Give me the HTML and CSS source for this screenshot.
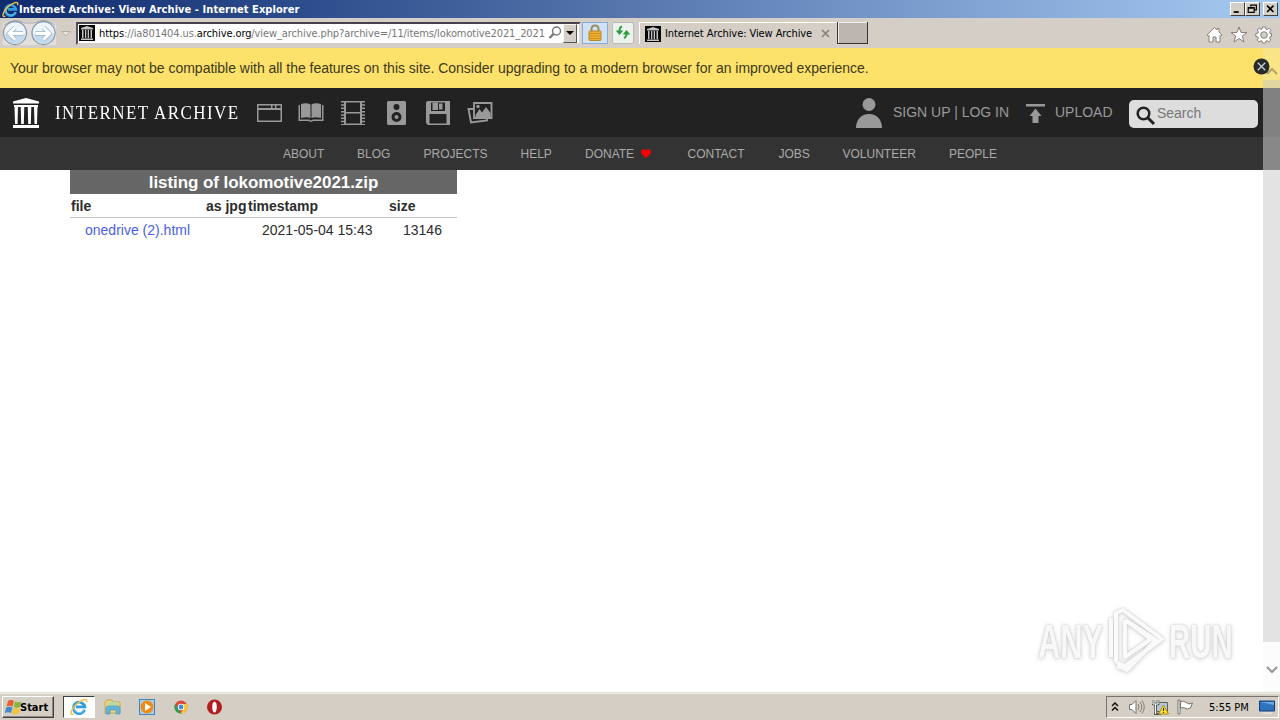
FILE: index.html
```html
<!DOCTYPE html>
<html lang="en">
<head>
<meta charset="utf-8">
<title>Internet Archive: View Archive</title>
<link rel="stylesheet" href="styles.css">
</head>
<body>
<svg width="0" height="0" class="defs">
  <defs>
    <symbol id="ie" viewBox="0 0 18 18">
      <path d="M14.6 11.8A5.7 5.7 0 1 1 14.8 8.8H6" fill="none" stroke="#2e9bdb" stroke-width="2.800"/>
      <path d="M14 11.6A5.2 5.2 0 0 1 4 10" fill="none" stroke="#7ed1f4" stroke-width="1"/>
      <path d="M3.500 16C-1 18 1 11 6 6.500C11 2 18 -1 16.500 4.500" fill="none" stroke="#f0c145" stroke-width="1.500"/>
    </symbol>
    <symbol id="temple" viewBox="0 0 28 30">
      <path d="M14 0L27 3.500V5.500H1V3.500ZM2 7H26V9H2ZM2.500 9H6L5.500 26H3ZM8.700 9H12.300L11.800 26H9.200ZM15.700 9H19.300L18.800 26H16.200ZM22 9H25.500L25 26H22.500ZM1 27H27V30H1Z" fill="currentColor"/>
    </symbol>
    <symbol id="favicon" viewBox="0 0 16 16">
      <path d="M0 0H16V16H0Z" fill="#050505"/>
      <path d="M8 1L14 3V4.500H2V3ZM3 5H4.500V13H3ZM6 5H7.300V13H6ZM8.700 5H10V13H8.700ZM11.500 5H13V13H11.500ZM2 13.500H14V15H2Z" fill="#c4c4c4"/>
    </symbol>
  </defs>
</svg>
<div class="screen">
  <div class="titlebar">
    <svg class="title-icon" width="17" height="17"><use href="#ie"/></svg>
    <span class="title-text">Internet Archive: View Archive - Internet Explorer</span>
    <div class="window-buttons">
      <svg class="winbtn" viewBox="0 0 15 14"><path d="M3 10.500H9" stroke="#000" stroke-width="2"/></svg>
      <svg class="winbtn" viewBox="0 0 15 14"><path d="M5.500 4V2.500H12V8H10M5 2.500H12.500M2.500 5.500H9.500V11H2.500ZM2 6H10" fill="none" stroke="#000" stroke-width="1.400"/></svg>
      <svg class="winbtn close" viewBox="0 0 15 14"><path d="M3.500 3L11 10.500M11 3L3.500 10.500" stroke="#000" stroke-width="1.900"/></svg>
    </div>
  </div>

  <div class="toolbar">
    <svg class="history" width="74" height="30" viewBox="0 0 74 30">
      <path d="M3 5Q14 -1 25 4H34Q45 -1 56 6V27H3Z" fill="#e2e0de"/>
      <path d="M4 7Q14 -1 25 5H34Q45 -1 55 7" fill="none" stroke="#aaa9aa"/>
      <g fill="#edf4fa" stroke="#8999a8" stroke-width="1.300"><circle cx="15" cy="15" r="11.500"/><circle cx="43.500" cy="15" r="11.500"/></g>
      <g fill="#c3d9ec"><path d="M5 16H25A10 10 0 0 1 5 16ZM33.500 16H53.500A10 10 0 0 1 33.500 16Z"/></g>
      <path d="M23 15.500H10M15 9.500L9 15.500L15 21.500M35.500 15.500H48.500M43.500 9.500L49.500 15.500L43.500 21.500" fill="none" stroke="#98b2c9" stroke-width="4.500"/>
      <path d="M23 15.500H10M15 9.500L9 15.500L15 21.500M35.500 15.500H48.500M43.500 9.500L49.500 15.500L43.500 21.500" fill="none" stroke="#fff" stroke-width="3.100"/>
      <path d="M61.500 13.500H70L65.800 18Z" fill="#e8e5df" stroke="#b1aea8"/>
    </svg>
    <div class="address">
      <svg width="16" height="16"><use href="#favicon"/></svg>
      <span class="url"><b>https</b>://ia801404.us.<b>archive.org</b>/view_archive.php?archive=/11/items/lokomotive2021_2021</span>
      <svg class="find" width="14" height="16" viewBox="0 0 14 16"><circle cx="8.500" cy="6" r="4" fill="none" stroke="#777" stroke-width="1.500"/><path d="M5.500 9L1.500 13" stroke="#777" stroke-width="2.400"/></svg>
      <span class="dropdown"></span>
    </div>
    <div class="lock">
      <svg width="14" height="18" viewBox="0 0 14 18"><path d="M3.500 9V5Q3.500 1.500 7 1.500T10.500 5V9" fill="none" stroke="#9c8a62" stroke-width="2"/><rect x="1" y="7" width="12" height="9.500" rx="1" fill="#eeb02e" stroke="#b8842a"/><path d="M2 9.500H12M2 12H12M2 14.500H12" stroke="#cc8f22"/></svg>
    </div>
    <div class="refresh">
      <svg width="16" height="16" viewBox="0 0 16 16"><path d="M7 1.500Q4.500 2 4.500 6M9 13Q11.500 12 11.500 9" fill="none" stroke="#38a048" stroke-width="2"/><path d="M.7 5.500H8.300L4.500 10ZM7.700 9.500H15.300L11.500 5Z" fill="#2c9b3c"/></svg>
    </div>
    <div class="tab">
      <svg width="16" height="16"><use href="#favicon"/></svg>
      <span class="tab-text">Internet Archive: View Archive</span>
      <svg class="tab-close" width="9" height="9" viewBox="0 0 9 9"><path d="M1 1L8 8M8 1L1 8" stroke="#85817b" stroke-width="1.700"/></svg>
    </div>
    <div class="newtab"></div>
    <svg class="tools" width="66" height="20" viewBox="0 0 66 20" fill="#fff" stroke="#85817c">
      <path d="M1 10L8.500 2.500L11 5V3.500H13V7L16 10L14.500 11L14 10.500V17H10V12H7V17H3V10.500L2.500 11Z"/>
      <path d="M33 2L35 7.500H41L36.300 11L38 17L33 13.500L28 17L29.700 11L25 7.500H31Z"/>
      <path fill-rule="evenodd" d="M56.500 2H59.500L60 4.200L61 4.600L63 3.200L65 5.200L63.500 7.200L64 8.400H65.500V11.500L64 12L63.500 13L64.800 15L62.800 17L61 15.700L60 16L59.500 18H56.500L56 16L55 15.700L53 17L51 15L52.400 13L52 12L49.800 11.500V8.500L52 8L52.500 7L51.200 5L53.200 3L55 4.500L56 4ZM58 6.700A3.300 3.300 0 1 0 58 13.300A3.300 3.300 0 1 0 58 6.700Z"/>
    </svg>
  </div>

  <main class="page">
    <div class="banner">Your browser may not be compatible with all the features on this site. Consider upgrading to a modern browser for an improved experience.</div>
    <svg class="banner-close" width="17" height="17" viewBox="0 0 17 17"><circle cx="8.500" cy="8.500" r="8" fill="#292b2b"/><path d="M4.800 4.800L12.200 12.200M12.200 4.800L4.800 12.200" stroke="#c7d0d5" stroke-width="1.300"/></svg>

    <nav class="topnav">
      <svg class="logo" width="28" height="30"><use href="#temple"/></svg>
      <span class="wordmark">INTERNET ARCHIVE</span>
      <div class="media">
        <svg viewBox="0 0 26 26"><path fill-rule="evenodd" d="M1 4H26V22H1ZM2.500 5.500V8H15V5.500ZM16.500 5.500V8H19V5.500ZM20.500 5.500V8H24.500V5.500ZM2.500 10V20.500H24.500V10Z"/></svg>
        <svg viewBox="0 0 26 26"><path d="M3 4Q9 2.500 12.500 4.500V18Q9 16.500 3 18ZM13.500 4.500Q17 2.500 23 4V18Q17 16.500 13.500 18ZM.5 5H2V19.500H11L13 20.500L15 19.500H24V5H25.500V21H15.500L13 22L10.500 21H.5Z"/></svg>
        <svg viewBox="0 0 26 26"><path fill-rule="evenodd" d="M4 1H22V25H4ZM6 2.500V12H20V2.500ZM6 13.500V23.500H20V13.500Z"/><path d="M2.500 1V25M23.500 1V25" fill="none" stroke="#999" stroke-width="3" stroke-dasharray="1.500 1.800"/></svg>
        <svg viewBox="0 0 26 26"><path fill-rule="evenodd" d="M5.500 1H21.500Q23 1 23 2.500V23.500Q23 25 21.500 25H5.500Q4 25 4 23.500V2.500Q4 1 5.500 1ZM13.500 4A3 3 0 1 0 13.500 10A3 3 0 1 0 13.500 4ZM13.500 12A5 5 0 1 0 13.500 22A5 5 0 1 0 13.500 12Z"/><circle cx="13.500" cy="17" r="2"/></svg>
        <svg viewBox="0 0 26 26"><path fill-rule="evenodd" d="M3 1H25V25H3L1 23V3Q1 1 3 1ZM6 2.500V11H20V2.500ZM14 3.500H17.500V9.500H14ZM4.500 14V23.500H21.500V14Z"/><path d="M7.500 2.500H13V10H7.500Z"/></svg>
        <svg viewBox="0 0 26 26"><path d="M7 3H24.500V18H7ZM7 9H1.500L4 22.500L20 20.500V18" fill="none" stroke="#999" stroke-width="1.900"/><path d="M8.500 15L12.500 9L15 12.500L19 7L23.500 13V17H8.500Z"/><circle cx="11" cy="6.500" r="1.700"/></svg>
      </div>
      <svg class="person" width="28" height="30" viewBox="0 0 28 30"><circle cx="14" cy="6.500" r="6.500"/><path d="M1 30C1 22 6 16 14 16S27 22 27 30Z"/></svg>
      <span class="signup">SIGN UP | LOG IN</span>
      <svg class="upload-icon" width="20" height="20" viewBox="0 0 20 20"><path d="M0 0H19V2.500H0ZM9.500 4.500L15.500 12H12.500V19H6.500V12H3.500Z"/></svg>
      <span class="upload">UPLOAD</span>
      <div class="search">
        <svg width="20" height="20" viewBox="0 0 20 20"><circle cx="7.500" cy="7.500" r="5.800" fill="none" stroke="#222" stroke-width="2.500"/><path d="M11.500 11.500L18 18" stroke="#222" stroke-width="3"/></svg>
        <span>Search</span>
      </div>
    </nav>

    <nav class="subnav">
      <span class="about">ABOUT</span><span class="blog">BLOG</span><span class="projects">PROJECTS</span><span class="help">HELP</span>
      <span class="donate">DONATE <svg width="10" height="9" viewBox="0 0 10 9"><path d="M5 9L.7 4.700C-1.300 1.500 2.500-1.500 5 1.500C7.500-1.500 11.300 1.500 9.300 4.700Z" fill="red"/></svg></span>
      <span class="contact">CONTACT</span><span class="jobs">JOBS</span><span class="volunteer">VOLUNTEER</span><span>PEOPLE</span>
    </nav>

    <section class="listing">
      <h1>listing of lokomotive2021.zip</h1>
      <div class="row head"><span>file</span><span>as jpg</span><span>timestamp</span><span>size</span></div>
      <div class="row"><span class="cell link">onedrive (2).html</span><span></span><span class="cell">2021-05-04 15:43</span><span class="cell">13146</span></div>
    </section>

    <div class="scrollbar">
      <svg width="12" height="8" viewBox="0 0 12 8"><path d="M1 7L6 2L11 7" fill="none" stroke="#8c8058" stroke-opacity=".65" stroke-width="2"/></svg>
      <div class="thumb"></div>
      <svg width="12" height="8" viewBox="0 0 12 8"><path d="M1 1L6 6L11 1" fill="none" stroke="#999" stroke-width="2.200"/></svg>
    </div>

    <div class="watermark">
      <span class="any">ANY</span>
      <svg width="60" height="66" viewBox="0 0 60 66"><path d="M9 54V5L16 2L55 31L18 58L9 54M18 12V49L44 31L18 12M4 10V49M18 12L49 32L20 62L10 58" fill="none" stroke="#fafafa" stroke-width="4" stroke-linejoin="round"/></svg>
      <span class="run">RUN</span>
    </div>
  </main>

  <footer class="taskbar">
    <div class="start">
      <svg width="18" height="17" viewBox="0 0 18 17"><path d="M3 2Q6 0 9 2L7.700 7.500Q4.500 6 1.500 7.500Z" fill="#e8602d"/><path d="M10 2.500Q13 4 16.500 2.500L15 8Q12 9.500 8.700 8Z" fill="#84b83d"/><path d="M1.200 8.500Q4.500 7 7.500 8.500L6 14Q3 12.500 0 14Z" fill="#4188cd"/><path d="M8.500 9Q12 10.500 15 9L13.500 14.500Q10 16 7 14.500Z" fill="#f3c332"/></svg>
      <span>Start</span>
    </div>
    <div class="task"><svg width="18" height="18"><use href="#ie"/></svg></div>
    <svg class="app" viewBox="0 0 18 18"><path d="M1 4L3 2H8L9 4H16V15H1Z" fill="#efd277" stroke="#c9a84d"/><path d="M4 4H14V8H4Z" fill="#b7dba0"/><path d="M2 16V10Q2 8 5 8H13Q16 8 16 10V16H12V12H6V16Z" fill="#65b4d7" stroke="#4a97b9" stroke-width=".7"/></svg>
    <svg class="app" viewBox="0 0 18 18"><rect x="1.500" y="1.500" width="15" height="15" fill="#a9cde9" stroke="#4186bd"/><circle cx="9" cy="9" r="6.400" fill="#f18c13"/><path d="M7 5L13 9L7 13Z" fill="#fff"/></svg>
    <svg class="app" viewBox="0 0 18 18"><circle cx="9" cy="9" r="6.500" fill="#de493b"/><path d="M3.400 5.700L9 15.500A6.500 6.500 0 0 1 3.400 5.700Z" fill="#25a25a"/><path d="M9 6H14.800A6.500 6.500 0 0 1 8.500 15.500L12 10Z" fill="#f6c832"/><circle cx="9" cy="9" r="3.200" fill="#fff"/><circle cx="9" cy="9" r="2.400" fill="#4a87df"/></svg>
    <svg class="app" viewBox="0 0 18 18"><circle cx="8.500" cy="9" r="7.500" fill="#b01e20"/><ellipse cx="8.500" cy="9" rx="2.300" ry="5.500" fill="#fff"/></svg>
    <div class="tray">
      <svg width="8" height="10" viewBox="0 0 8 10"><path d="M1 4L4 1L7 4M1 8.500L4 5.500L7 8.500" fill="none" stroke="#111" stroke-width="1.500"/></svg>
      <svg class="sound" width="16" height="16" viewBox="0 0 16 16" stroke="#77736c"><path d="M.5 5.500H3L7 1.500V14.500L3 10.500H.5Z" fill="#fff"/><path d="M9 5Q11 8 9 11M11 3Q14.500 8 11 13M13 1.500Q17.500 8 13 14.500" fill="none" stroke-width=".9"/></svg>
      <svg class="net" width="17" height="16" viewBox="0 0 17 16"><path d="M4.500 3.500H15.500V12.500H4.500Z" fill="#b5c8d1" stroke="#5e625d"/><path d="M1 1V5H6V1M3.500 5V15M2 15H9" fill="none" stroke="#555" stroke-width="2.500"/><path d="M1 1V5H6V1M3.500 5V15" fill="none" stroke="#fff"/><path d="M11.500 6L16.500 15H6.500Z" fill="#ffdc24" stroke="#a78b1f"/><path d="M11.500 9V12M11.500 13V14" stroke="#222"/></svg>
      <svg class="flag" width="17" height="16" viewBox="0 0 17 16"><path d="M1 1H3V15H1ZM3.500 2.500Q7 1.500 9 3.500Q12 6 15.500 4L13.500 9Q10 11 7.500 9Q5.500 8 3.500 9Z" fill="#fff" stroke="#77736c"/></svg>
      <span class="clock">5:55 PM</span>
      <svg class="desktop" width="16" height="14" viewBox="0 0 16 14"><path d="M.5 1H15.500V11H.5Z" fill="#2d73bd" stroke="#153c7a"/><path d="M1 2L15 5V2Z" fill="#69a9df"/><path d="M3 13H13" stroke="#f1f1ef"/></svg>
    </div>
  </footer>
</div>
</body>
</html>
```
FILE: styles.css
```css
* { box-sizing: border-box; }
body { margin: 0; overflow: hidden; font-family: "Liberation Sans", Arial, sans-serif; }
svg { display: block; flex: none; }
.defs { position: absolute; }
.screen { width: 1280px; height: 720px; display: flex; flex-direction: column; background: #fff; white-space: nowrap; overflow: hidden; }

.titlebar { height: 18px; flex: none; display: flex; align-items: center; padding: 0 2px; background: linear-gradient(90deg, #102b6d, #30508f 26%, #5676ad 49%, #7da0d1 74%, #a6caf0); }
.title-text { width: 300px; margin-left: 0; padding-top: 1px; color: #fff; font: bold 11px/18px "DejaVu Sans Condensed", "DejaVu Sans", sans-serif; letter-spacing: .06px; }
.window-buttons { display: flex; margin: 0 0 0 auto; }
.winbtn { width: 15px; height: 14px; background: #d4d0c8; border: 1px solid; border-color: #fff #404040 #404040 #fff; }
.winbtn.close { margin-left: 3px; }

.toolbar { height: 30px; flex: none; display: flex; align-items: center; background: #d4cec7; }
.history { width: 74px; }
.address { width: 505px; height: 23px; margin-left: 2px; display: flex; align-items: center; padding: 0 2px; background: #fff; border: 2px solid; border-color: #474249 #dedad5 #d2cec8 #55515a; }
.address > svg:first-child { margin-left: -1px; }
.url { width: 447px; margin-left: 4px; padding-top: 2px; color: #777; font: 11px/18px "DejaVu Sans Condensed", "DejaVu Sans", sans-serif; letter-spacing: -.1px; }
.url b { color: #000; font-weight: normal; }
.find { margin-left: 3px; }
.dropdown { width: 16px; height: 19px; margin-left: 1px; display: grid; place-items: center; background: #d4d0c8; border: 1px solid; border-color: #f7f5f1 #555 #555 #f7f5f1; }
.dropdown::after { content: ""; border: 4px solid transparent; border-top-color: #000; border-bottom: 0; }
.lock { width: 26px; height: 22px; margin-left: 1px; display: grid; place-items: center; background: #cfe2f6; border: 1px solid #88abd7; }
.refresh { width: 22px; height: 22px; margin-left: 4px; display: grid; place-items: center; background: #edf1ee; border: 1px solid #b7bcb9; border-radius: 2px; }
.tab { width: 198px; height: 22px; margin-left: 5px; padding-left: 5px; display: flex; align-items: center; border: 1px solid #fff; border-right: 0; border-bottom: 0; }
.tab-text { width: 150px; margin-left: 4px; padding-top: 1px; color: #000; font: 11px/18px "DejaVu Sans Condensed", "DejaVu Sans", sans-serif; letter-spacing: -.08px; }
.tab-close { margin-left: 6px; }
.newtab { width: 31px; height: 22px; background: #bdb6b0; border: solid #353535; border-width: 0 1px 1px; box-shadow: inset 1px 1px #eee; }
.tools { margin: 4px 8px 0 auto; }

.page { height: 645px; flex: none; position: relative; border-bottom: 1px solid #ddd9d4; }
.banner { height: 40px; padding-left: 10px; background: #fce26a; color: #3f3820; font-size: 14px; line-height: 41px; letter-spacing: -.022px; }
.banner-close { position: absolute; left: 1253px; top: 10px; z-index: 2; }
.topnav { height: 49px; display: flex; align-items: center; padding-left: 12px; background: #222; color: #999; fill: #999; font-size: 14px; }
.logo { color: #fff; margin-top: 1px; }
.wordmark { width: 193px; margin-left: 15px; color: #fff; font: 19px/30px "Liberation Serif", serif; letter-spacing: 1.6px; transform: scaleX(.895); transform-origin: left; }
.media { display: flex; gap: 16.2px; margin-left: 8px; }
.media svg { width: 26px; height: 26px; }
.person { margin-left: 362px; }
.signup { width: 133px; margin: -2px 0 0 10px; }
.upload-icon { margin-top: 2px; }
.upload { width: 74px; margin: -2px 0 0 9px; }
.search { width: 129px; height: 28px; margin-top: 3px; display: flex; align-items: center; padding-left: 7px; border-radius: 5px; background: #ddd; color: #777; }
.search svg { margin-top: 3px; }
.search span { margin: -2px 0 0 1px; }
.subnav { height: 33px; display: flex; align-items: center; padding-left: 283px; background: #333; color: #aaa; font-size: 12px; }
.about { width: 74px; } .blog { width: 66.5px; } .projects { width: 97px; } .help { width: 64.5px; }
.donate { width: 102.5px; display: flex; align-items: center; gap: 7px; }
.contact { width: 91px; } .jobs { width: 64px; } .volunteer { width: 106.5px; }

.listing { width: 387px; margin-left: 70px; color: #2c2c2c; font-size: 14px; }
.listing h1 { height: 24px; margin: 0; background: #666; color: #fff; text-align: center; font-size: 17px; line-height: 25px; letter-spacing: -.07px; }
.row { height: 24px; display: grid; grid-template-columns: 135px 42px 141px 68px; line-height: 24px; padding-left: 1px; }
.row.head { font-weight: bold; border-bottom: 1px solid #c4c4c4; }
.cell { padding-left: 14px; }
.link { color: #4b5ee8; }

.scrollbar { position: absolute; top: 0; right: 0; width: 17px; height: 644px; display: flex; flex-direction: column; align-items: center; background: rgba(240,240,240,.22); padding-top: 19px; }
.thumb { width: 17px; height: 562px; margin: 5px 0 24px; background: rgba(195,195,195,.43); }
.watermark { position: absolute; left: 1038px; top: 560px; height: 66px; display: flex; align-items: center; filter: drop-shadow(0 0 1px #c8c8c8) drop-shadow(0 1px 2px #ddd); }
.any, .run { color: #f8f8f8; font: bold 49px/66px "Liberation Sans Narrow", "Liberation Sans", sans-serif; transform-origin: left; }
.any { width: 69px; transform: scaleX(.63); }
.run { width: 65px; margin-left: 2px; transform: scaleX(.6); }

.taskbar { height: 27px; flex: none; display: flex; align-items: center; background: #d4cec4; border-top: 1px solid #f4f1ec; }
.start { width: 52px; height: 22px; margin-left: 2px; display: flex; align-items: center; padding-left: 2px; border: 1px solid; border-color: #fff #404040 #404040 #fff; box-shadow: inset -1px -1px #8b8781; }
.start span { font: bold 11px/18px "DejaVu Sans Condensed", "DejaVu Sans", sans-serif; margin-left: -3px; padding-top: 1px; }
.task { width: 32px; height: 22px; margin: 0 9px; display: grid; place-items: center; background: #fff; border: 1px solid; border-color: #404040 #fff #fff #404040; }
.app { width: 18px; height: 18px; margin-right: 16px; }
.tray { width: 173px; height: 22px; display: flex; align-items: center; margin: 0 1px 0 auto; padding-left: 4px; border: 1px solid; border-color: #77736d #fff #fff #77736d; }
.sound { margin-left: 10px; } .net { margin-left: 7px; } .flag { margin-left: 8px; }
.clock { width: 42px; margin-left: 15px; padding-top: 1px; font: 11px/20px "DejaVu Sans Condensed", "DejaVu Sans", sans-serif; }
.desktop { margin-left: 8px; }
```
